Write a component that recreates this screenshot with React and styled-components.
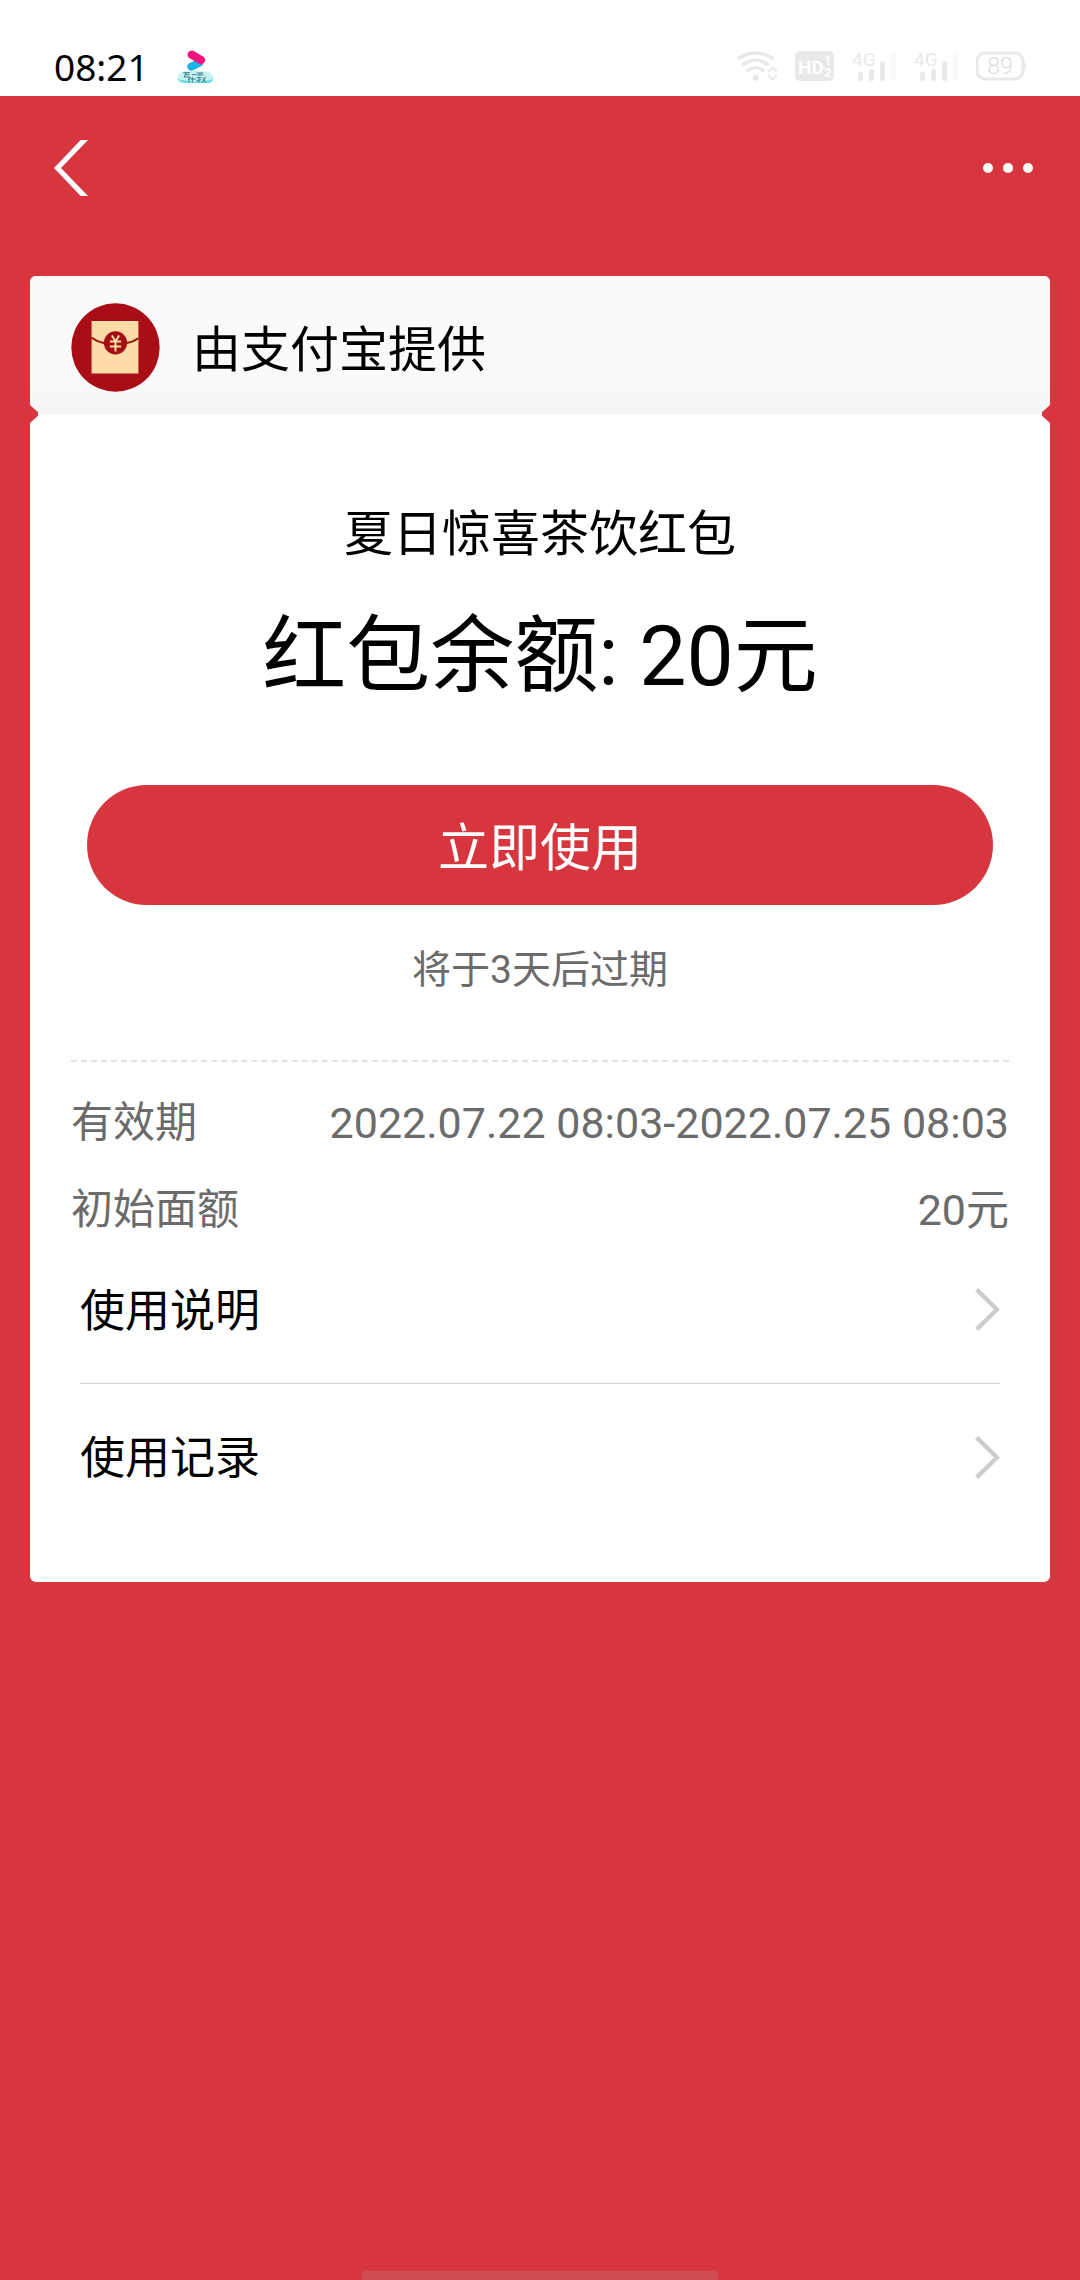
import React from 'react'
import styled, { createGlobalStyle } from 'styled-components'

const RED = '#d8363f'
const FAINT = '#e9e9e9'

const facts = [
  { label: '有效期', value: '2022.07.22 08:03-2022.07.25 08:03' },
  { label: '初始面额', value: '20元' },
]

const links = [
  { id: 'guide', text: '使用说明' },
  { id: 'records', text: '使用记录' },
]

const WifiIcon = () => (
  <svg width="40" height="32" viewBox="0 0 120 96" fill="none" stroke={FAINT} strokeWidth="10" strokeLinecap="round">
    <path d="M6 24Q56 -6 106 24" />
    <path d="M19 43Q56 18 92 43" />
    <path d="M33 61Q56 45 78 61" />
    <circle cx="56" cy="83" r="9" fill={FAINT} stroke="none" />
    <path d="M96 64L107 53L118 64M96 77L107 88L118 77" strokeWidth="6" />
  </svg>
)

const HdIcon = () => (
  <svg width="39" height="32" viewBox="0 0 39 32" fontFamily="Roboto, sans-serif" fontWeight="700" fill="#fff">
    <rect y="1" width="39" height="30" rx="5" fill={FAINT} />
    <text x="3" y="24" fontSize="19">HD</text>
    <text x="29" y="15" fontSize="13">1</text>
    <text x="29" y="27" fontSize="13">2</text>
  </svg>
)

const SignalIcon = () => (
  <svg width="44" height="40" viewBox="0 -4 44 40" fill={FAINT}>
    <text x="0" y="16" fontSize="19" fontFamily="Roboto, sans-serif">4G</text>
    <rect x="6" y="22" width="5" height="9" rx="2" />
    <rect x="17" y="19" width="5" height="12" rx="2" />
    <rect x="28" y="11" width="5" height="20" rx="2" />
    <rect x="39" y="1" width="5" height="30" rx="2" fill="#fafafa" />
  </svg>
)

const BatteryIcon = () => (
  <svg width="50" height="32" viewBox="0 0 50 32">
    <rect x="1" y="3" width="46" height="26" rx="8" fill="none" stroke={FAINT} strokeWidth="3" />
    <path d="M47 10Q50 12 50 16T47 22Z" fill={FAINT} />
    <text x="24" y="24" textAnchor="middle" fontSize="23" fontWeight="300" fontFamily="Roboto, sans-serif" fill="#dedede">89</text>
  </svg>
)

const AppBadge = () => (
  <svg width="38" height="36" viewBox="0 0 114 108" fill="none" strokeLinecap="round">
    <path d="M43 56L66 45" stroke="#1cb4e8" strokeWidth="24" />
    <path d="M44 20L72 36" stroke="#f5127e" strokeWidth="25" />
    <path d="M12 74Q22 66 34 71Q56 66 80 71Q98 68 102 79Q112 84 108 98Q104 106 90 105H14Q0 104 2 90Q2 78 12 74Z" fill="#c4f3f2" />
    <path d="M4 94Q12 106 28 105H92Q108 104 108 92Q90 100 78 98Q46 104 4 94Z" fill="#6fdde2" />
    <path
      d="M20 74H38M28 74L22 87H38M24 80H36M46 80H56M60 75H78M69 75V81M60 81H78M36 90V103M40 88L34 95M46 88V102M42 93H56M60 89H72M66 87V103M60 98L72 95M78 89L86 103M86 87L76 103"
      stroke="#3c7f87"
      strokeWidth="3"
    />
  </svg>
)

const BackIcon = () => (
  <svg width="34" height="56" viewBox="0 0 102 168" fill="#fff">
    <path d="M0 84L80 0H102L21 84L102 168H80Z" />
  </svg>
)

const MoreIcon = () => (
  <svg width="50" height="12" viewBox="0 0 50 12" fill="#fff">
    <circle cx="5" cy="6" r="5" />
    <circle cx="25" cy="6" r="5" />
    <circle cx="45" cy="6" r="5" />
  </svg>
)

const EnvelopeIcon = () => (
  <svg width="89" height="89" viewBox="0 0 268 268" fill="none">
    <circle cx="134" cy="134" r="133" fill="#a90d16" />
    <path d="M62 54H203V212H62Z" fill="#ffdba8" />
    <path d="M62 104Q82 119 104 121M164 121Q184 119 203 106" stroke="#951309" strokeWidth="6" />
    <circle cx="134" cy="120" r="35" fill="#a30f13" />
    <path d="M123 98L134 115L145 98M134 115V146M117 116H151M117 131H151" stroke="#ffdba8" strokeWidth="6" />
  </svg>
)

const ArrowIcon = () => (
  <svg width="25" height="43" viewBox="0 0 75 129" fill="none" stroke="#ccc" strokeWidth="13">
    <path d="M5 5L66 64.500L5 124" />
  </svg>
)

const App = () => (
  <Page>
    <GlobalStyle />
    <StatusBar>
      <StatusGroup>
        <Clock>08:21</Clock>
        <AppBadge />
      </StatusGroup>
      <StatusGroup>
        <WifiIcon />
        <HdIcon />
        <SignalIcon />
        <SignalIcon />
        <BatteryIcon />
      </StatusGroup>
    </StatusBar>
    <NavBar>
      <IconButton type="button" aria-label="返回"><BackIcon /></IconButton>
      <IconButton type="button" aria-label="更多"><MoreIcon /></IconButton>
    </NavBar>
    <Card>
      <Provider>
        <EnvelopeIcon />
        <ProviderName>由支付宝提供</ProviderName>
      </Provider>
      <Summary>
        <Title>夏日惊喜茶饮红包</Title>
        <Balance>红包余额: 20元</Balance>
        <UseButton type="button">立即使用</UseButton>
        <Expiry>将于3天后过期</Expiry>
      </Summary>
      <Facts>
        {facts.map(fact => (
          <Fact key={fact.label}>
            <dt>{fact.label}</dt>
            <dd>{fact.value}</dd>
          </Fact>
        ))}
      </Facts>
      <Links>
        {links.map(link => (
          <LinkRow key={link.id} href={`#${link.id}`}>
            <span>{link.text}</span>
            <ArrowIcon />
          </LinkRow>
        ))}
      </Links>
    </Card>
    <HomeIndicator />
  </Page>
)

const GlobalStyle = createGlobalStyle`
  * {
    box-sizing: border-box;
  }
  body {
    margin: 0;
    background: ${RED};
    font-family: Roboto, "Noto Sans CJK SC", sans-serif;
    color: #000;
  }
  svg {
    display: block;
    flex: none;
  }
`

const Page = styled.div`
  display: flex;
  flex-direction: column;
  min-height: 100vh;
`

const StatusBar = styled.header`
  display: flex;
  justify-content: space-between;
  height: 96px;
  padding: 36px 54px 0;
  background: #fff;
`

const StatusGroup = styled.div`
  display: flex;
  align-items: center;
  gap: 18px;
  height: 60px;
`

const Clock = styled.time`
  width: 105px;
  font-family: "Noto Sans", sans-serif;
  font-size: 37px;
`

const NavBar = styled.nav`
  display: flex;
  align-items: center;
  justify-content: space-between;
  height: 144px;
  padding: 0 47px 0 54px;
`

const IconButton = styled.button`
  display: flex;
  align-items: center;
  height: 96px;
  padding: 0;
  border: none;
  background: none;
  cursor: pointer;
`

const Card = styled.main`
  margin: 36px 30px;
  padding-bottom: 52px;
  background: #fff;
  border-radius: 6px;
`

const Provider = styled.div`
  position: relative;
  display: flex;
  align-items: center;
  gap: 32px;
  height: 138px;
  padding: 4px 41px 0;
  background: linear-gradient(#fafafa 80%, #f4f4f4);
  border-radius: 6px 6px 0 0;

  /* ticket notches on the seam */
  &::before,
  &::after {
    content: '';
    position: absolute;
    bottom: -9px;
    width: 8px;
    height: 18px;
    background: ${RED};
  }
  &::before {
    left: 0;
    clip-path: polygon(0 0, 100% 40%, 100% 60%, 0 100%);
  }
  &::after {
    right: 0;
    clip-path: polygon(100% 0, 0 40%, 0 60%, 100% 100%);
  }
`

const ProviderName = styled.span`
  padding-top: 8px;
  font-size: 49px;
  line-height: 60px;
`

const Summary = styled.section`
  margin: 0 41px;
  padding: 91px 16px 66px;
  border-bottom: 2px dashed #e2e2e2;
  text-align: center;
`

const Title = styled.h1`
  margin: 0;
  font-size: 49px;
  font-weight: 400;
  line-height: 60px;
`

const Balance = styled.p`
  margin: 42px 0 78px;
  font-size: 84px;
  line-height: 100px;
`

const UseButton = styled.button`
  width: 100%;
  height: 120px;
  padding: 8px 0 0;
  border: none;
  border-radius: 60px;
  background: ${RED};
  color: #fff;
  font-family: inherit;
  font-size: 51px;
  line-height: 60px;
  cursor: pointer;
`

const Expiry = styled.p`
  margin: 41px 0 0;
  color: #6b6b6b;
  font-size: 39px;
  line-height: 48px;
`

const Facts = styled.dl`
  display: flex;
  flex-direction: column;
  gap: 35px;
  margin: 0;
  padding: 35px 41px 0;
`

const Fact = styled.div`
  display: flex;
  justify-content: space-between;
  color: #6b6b6b;
  font-size: 42px;
  line-height: 52px;

  dd {
    margin: 0;
    font-size: 43px;
  }
`

const Links = styled.div`
  margin: 0 50px;
`

const LinkRow = styled.a`
  display: flex;
  align-items: center;
  justify-content: space-between;
  height: 147px;
  color: #000;
  font-size: 45px;
  line-height: 60px;
  text-decoration: none;

  span {
    padding-top: 4px;
  }

  & + & {
    border-top: 1px solid #d6d6d6;
  }
`

const HomeIndicator = styled.div`
  width: 33%;
  height: 9px;
  margin: auto auto 0;
  border-radius: 4px 4px 0 0;
  background: #cd4d51;
`

export default App
